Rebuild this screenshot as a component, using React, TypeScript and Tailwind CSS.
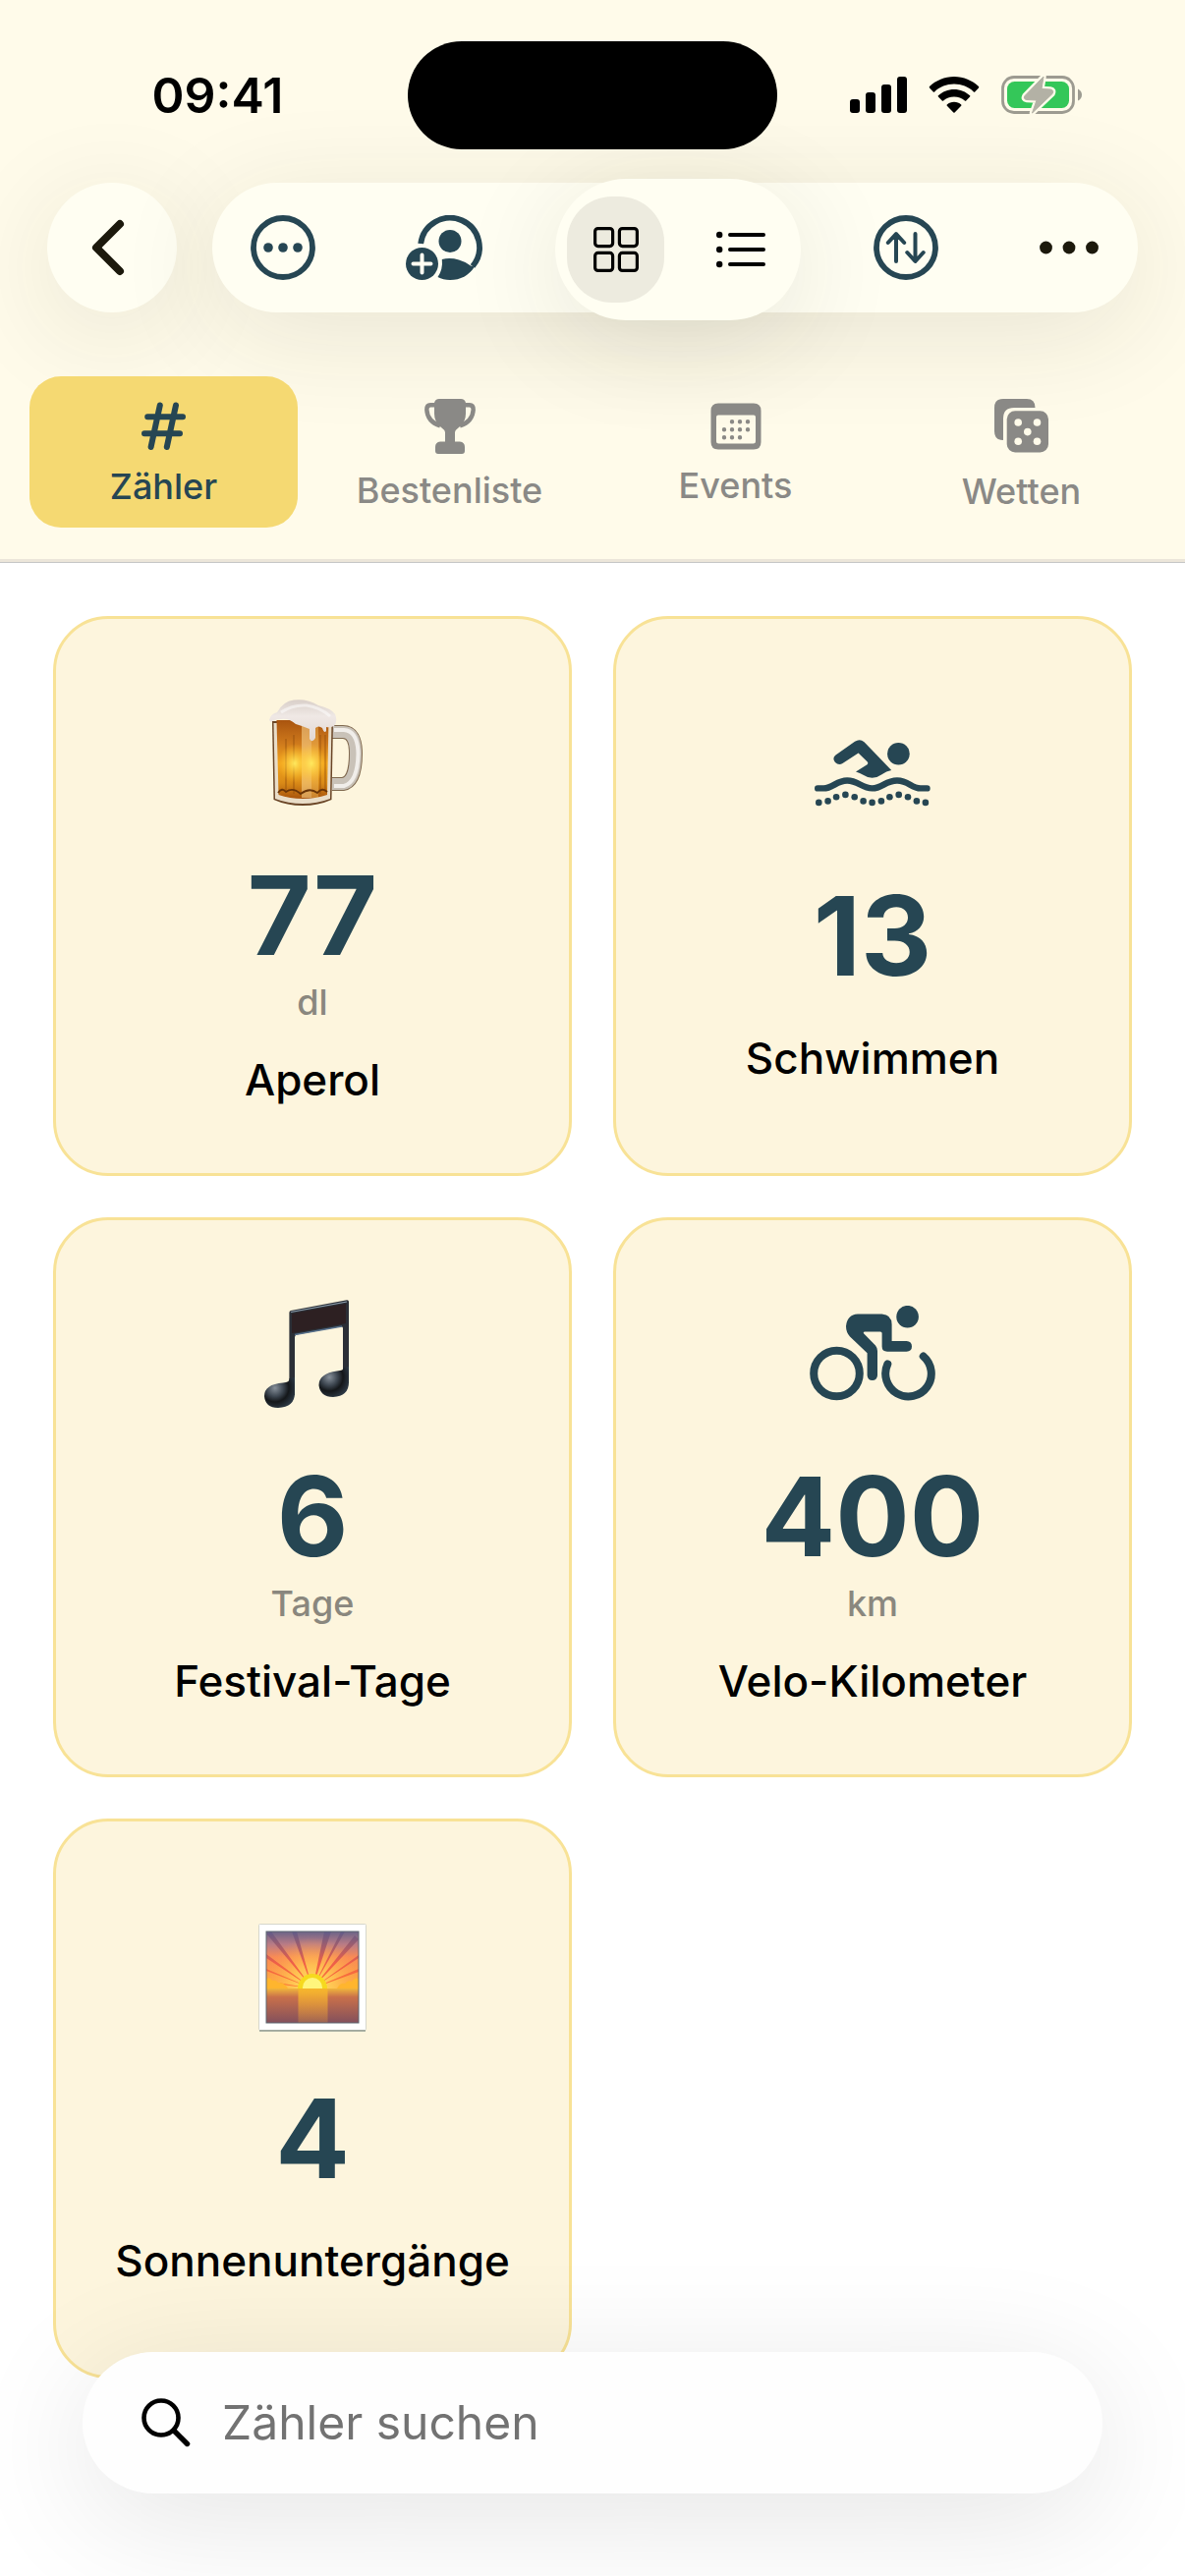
import type { ReactNode } from "react";
import clsx from "clsx";

const BAR_CLASS =
  "rounded-full bg-[#fffef2] shadow-[0_20px_110px_rgba(50,45,30,0.11)]";

/* ---------- status bar ---------- */

function SignalIcon() {
  return (
    <svg width="58" height="38" viewBox="0 0 58 38" fill="#000" aria-hidden="true">
      <rect x="0" y="23" width="10" height="14" rx="3" />
      <rect x="16" y="16" width="10" height="21" rx="3" />
      <rect x="32" y="8" width="10" height="29" rx="3" />
      <rect x="48" y="0" width="10" height="37" rx="3" />
    </svg>
  );
}

function WifiIcon() {
  return (
    <svg width="52" height="38" viewBox="0 0 52 38" fill="#000" aria-hidden="true">
      <path d="M26 0C35.700 0 44.500 3.800 51 10.100Q51.600 10.700 51 11.400L47.200 15.400Q46.600 16 45.900 15.400C40.700 10.500 33.700 7.600 26 7.600S11.300 10.500 6.100 15.400Q5.400 16 4.800 15.400L1 11.400Q.4 10.700 1 10.100C7.500 3.800 16.300 0 26 0Z" />
      <path d="M26 13C32.200 13 37.900 15.400 42.100 19.300Q42.700 19.900 42.100 20.500L38.200 24.500Q37.600 25.100 36.900 24.500C34 21.900 30.200 20.400 26 20.400S18 21.900 15.100 24.500Q14.400 25.100 13.800 24.500L9.900 20.500Q9.300 19.900 9.900 19.300C14.100 15.400 19.800 13 26 13Z" />
      <path d="M26 25.800C28.800 25.800 31.300 26.800 33.200 28.500Q33.800 29.100 33.200 29.700L26.600 36.500Q26 37.100 25.400 36.500L18.800 29.700Q18.200 29.100 18.800 28.500C20.700 26.800 23.200 25.800 26 25.800Z" />
    </svg>
  );
}

function BatteryIcon() {
  const bolt =
    "M43 1L24 20.500Q22 24 26 24.500L36 25L31.500 38L52 18.500Q54 14.500 50 14L41 13.500Z";
  return (
    <svg width="82" height="42" viewBox="0 -1 82 42" aria-hidden="true">
      <rect x="1.500" y="1.500" width="72" height="36" rx="11.500" fill="none" stroke="#9d9b91" strokeWidth="2.800" />
      <rect x="6" y="6" width="63" height="27" rx="7.500" fill="#34c759" />
      <path d="M78 13.500Q82 15.500 82 19.500T78 25.500Z" fill="#9d9b91" />
      <path d={bolt} fill="#fffbea" stroke="#fffbea" strokeWidth="5.500" strokeLinejoin="round" />
      <path d={bolt} fill="#b3b1a5" stroke="#b3b1a5" strokeWidth="1" strokeLinejoin="round" />
    </svg>
  );
}

function StatusBar() {
  return (
    <div className="grid h-[110px] grid-cols-[1fr_376px_1fr] items-center">
      <time className="pl-7 text-center text-[50px] font-semibold leading-none text-black">
        09:41
      </time>
      <div className="h-full rounded-full bg-black" />
      <div className="flex items-center justify-center gap-[22px] pr-8">
        <SignalIcon />
        <WifiIcon />
        <BatteryIcon />
      </div>
    </div>
  );
}

/* ---------- toolbar ---------- */

function ChevronIcon() {
  return (
    <svg width="44" height="60" viewBox="0 0 44 60" fill="none" stroke="#1c190c" strokeWidth="8" strokeLinecap="round" strokeLinejoin="round" aria-hidden="true">
      <path d="M30 6L6 30L30 54" />
    </svg>
  );
}

function MoreCircleIcon() {
  return (
    <svg width="66" height="66" viewBox="0 0 66 66" fill="#264653" aria-hidden="true">
      <circle cx="33" cy="33" r="30" fill="none" stroke="#264653" strokeWidth="5.800" />
      <circle cx="18" cy="33" r="4.800" />
      <circle cx="33" cy="33" r="4.800" />
      <circle cx="48" cy="33" r="4.800" />
    </svg>
  );
}

function AddPersonIcon() {
  return (
    <svg width="84" height="66" viewBox="0 0 84 66" fill="#264653" aria-hidden="true">
      <path d="M15.200 29A30 30 0 1 1 68 52" fill="none" stroke="#264653" strokeWidth="5.800" />
      <circle cx="45" cy="26.500" r="11.500" />
      <path d="M36.800 45Q45 43 54 45.500Q61 47.500 66 51.500L70 52.500Q61 66 45 66Q38 66 32.500 63Q38 55 36.800 45Z" />
      <circle cx="16.500" cy="49.500" r="16.500" />
      <path d="M16.500 40.500V58.500M7.500 49.500H25.500" stroke="#fffef2" strokeWidth="4" strokeLinecap="round" />
    </svg>
  );
}

function GridIcon() {
  return (
    <svg width="46" height="46" viewBox="0 0 46 46" fill="none" stroke="#000" strokeWidth="3.200" aria-hidden="true">
      <rect x="1.600" y="1.600" width="18" height="18" rx="3" />
      <rect x="26.400" y="1.600" width="18" height="18" rx="3" />
      <rect x="1.600" y="26.400" width="18" height="18" rx="3" />
      <rect x="26.400" y="26.400" width="18" height="18" rx="3" />
    </svg>
  );
}

function ListIcon() {
  return (
    <svg width="50" height="38" viewBox="0 0 50 38" stroke="#000" strokeWidth="4" strokeLinecap="round" aria-hidden="true">
      <path d="M14 4H48M14 19H48M14 34H48" />
      <circle cx="3.200" cy="4" r="1.200" />
      <circle cx="3.200" cy="19" r="1.200" />
      <circle cx="3.200" cy="34" r="1.200" />
    </svg>
  );
}

function SortIcon() {
  return (
    <svg width="66" height="66" viewBox="0 0 66 66" fill="none" stroke="#264653" strokeLinecap="round" strokeLinejoin="round" aria-hidden="true">
      <circle cx="33" cy="33" r="30" strokeWidth="5.800" />
      <path d="M23 47V19.500M14.800 28L23 19L31.200 28M42.500 19V46.500M34.300 38L42.500 47L50.700 38" strokeWidth="4" />
    </svg>
  );
}

function DotsIcon() {
  return (
    <svg width="60" height="14" viewBox="0 0 60 14" fill="#1c190c" aria-hidden="true">
      <circle cx="6.500" cy="7" r="6.400" />
      <circle cx="30" cy="7" r="6.400" />
      <circle cx="53.500" cy="7" r="6.400" />
    </svg>
  );
}

function ToolButton({ label, children }: { label: string; children: ReactNode }) {
  return (
    <button
      type="button"
      aria-label={label}
      className="flex size-[132px] shrink-0 items-center justify-center rounded-full"
    >
      {children}
    </button>
  );
}

function Toolbar() {
  return (
    <div className="mt-[34px] flex h-[132px] items-center gap-9 px-12">
      <div className={BAR_CLASS}>
        <ToolButton label="Zurück">
          <ChevronIcon />
        </ToolButton>
      </div>
      <div className={clsx(BAR_CLASS, "flex h-full flex-1 items-center justify-between pl-1.5 pr-1")}>
        <ToolButton label="Optionen">
          <MoreCircleIcon />
        </ToolButton>
        <ToolButton label="Person hinzufügen">
          <AddPersonIcon />
        </ToolButton>
        {/* The view switch is taller than the bar and hangs a little below it */}
        <div className={clsx(BAR_CLASS, "ml-2.5 mr-1.5 mt-1 flex h-36 w-[250px] shrink-0 items-center justify-between px-3")}>
          <button
            type="button"
            aria-label="Raster"
            aria-pressed="true"
            className="flex h-[108px] w-[99px] items-center justify-center rounded-[46px] bg-[#edebdf]"
          >
            <GridIcon />
          </button>
          <button
            type="button"
            aria-label="Liste"
            aria-pressed="false"
            className="flex h-[108px] w-[99px] items-center justify-center"
          >
            <ListIcon />
          </button>
        </div>
        <ToolButton label="Sortieren">
          <SortIcon />
        </ToolButton>
        <ToolButton label="Mehr">
          <DotsIcon />
        </ToolButton>
      </div>
    </div>
  );
}

/* ---------- tabs ---------- */

function HashIcon() {
  return (
    <svg width="45" height="50" viewBox="0 0 45 50" fill="none" stroke="#264653" strokeWidth="6" strokeLinecap="round" aria-hidden="true">
      <path d="M18.800 3.500L9.600 46M35 3.500L25.800 46M6.200 15.300H42M3 32.300H39" />
    </svg>
  );
}

function TrophyIcon() {
  return (
    <svg width="52" height="58" viewBox="0 0 52 58" fill="#8a8986" aria-hidden="true">
      <path d="M10 5Q11 1 15 1H37Q41 1 42 5V16Q42 25 35 30Q31.500 32.500 31 35V44.500H36Q41 45 41 50V54Q41 57 38 57H14Q11 57 11 54V50Q11 45 16 44.500H21V35Q20.500 32.500 17 30Q10 25 10 16Z" />
      <path d="M11 7.300H6Q2.300 7.300 2.300 12Q3 24 16 28.500M41 7.300H46Q49.700 7.300 49.700 12Q49 24 36 28.500" fill="none" stroke="#8a8986" strokeWidth="4.400" />
    </svg>
  );
}

function CalendarIcon() {
  return (
    <svg width="52" height="48" viewBox="0 0 52 48" fill="#8a8986" aria-hidden="true">
      <path fillRule="evenodd" d="M8 .5H44Q51.500 .5 51.500 8V40Q51.500 47.500 44 47.500H8Q.5 47.500 .5 40V8Q.5 .5 8 .5ZM8 12.500Q6 12.500 6 14.500V39Q6 41.500 8.500 41.500H43.500Q46 41.500 46 39V14.500Q46 12.500 44 12.500Z" />
      <path d="M22 19.300h.01M30 19.300h.01M38 19.300h.01M14 27.300h.01M22 27.300h.01M30 27.300h.01M38 27.300h.01M14 35.300h.01M22 35.300h.01M30 35.300h.01" stroke="#8a8986" strokeWidth="4.400" strokeLinecap="round" />
    </svg>
  );
}

function DiceIcon() {
  return (
    <svg width="56" height="60" viewBox="0 -2 56 60" fill="#8a8986" aria-hidden="true">
      <path d="M9 0H33Q41.500 0 41.500 9H20Q9 9 9 20V42Q0 42 0 33V9Q0 0 9 0Z" />
      <rect x="12.700" y="12.300" width="42.300" height="42.300" rx="8.500" />
      <g fill="#fffbea">
        <circle cx="24.200" cy="24" r="3.800" />
        <circle cx="43.500" cy="24" r="3.800" />
        <circle cx="33.800" cy="33.600" r="3.800" />
        <circle cx="24.200" cy="43.300" r="3.800" />
        <circle cx="43.500" cy="43.300" r="3.800" />
      </g>
    </svg>
  );
}

const TABS = [
  { label: "Zähler", icon: <HashIcon />, active: true },
  { label: "Bestenliste", icon: <TrophyIcon />, active: false },
  { label: "Events", icon: <CalendarIcon />, active: false },
  { label: "Wetten", icon: <DiceIcon />, active: false },
];

function Tabs() {
  return (
    <nav className="mt-[65px] grid grid-cols-4 gap-[18px] px-[30px] pb-8">
      {TABS.map((tab) => (
        <button
          key={tab.label}
          type="button"
          aria-current={tab.active ? "page" : undefined}
          className={clsx(
            "flex h-[154px] flex-col items-center justify-center gap-4 rounded-[32px] pt-1 text-[36px] font-medium leading-10",
            tab.active ? "bg-[#f5d972] text-[#264653]" : "text-[#8a8986]",
          )}
        >
          {tab.icon}
          {tab.label}
        </button>
      ))}
    </nav>
  );
}

/* ---------- counter icons ---------- */

function BeerIcon() {
  return (
    <svg width="104" height="108" viewBox="-8 0 104 108" aria-hidden="true">
      <defs>
        <linearGradient id="beer" x1="0" y1="0" x2="0" y2="1">
          <stop offset="0" stopColor="#a9540f" />
          <stop offset="0.300" stopColor="#cf7a1c" />
          <stop offset="0.550" stopColor="#f3a51c" />
          <stop offset="0.800" stopColor="#d98a17" />
          <stop offset="1" stopColor="#a9540c" />
        </linearGradient>
        <radialGradient id="beerGlow">
          <stop offset="0" stopColor="#ffe95e" />
          <stop offset="1" stopColor="#ffc02c" stopOpacity="0" />
        </radialGradient>
        <linearGradient id="foam" x1="0" y1="0" x2="0" y2="1">
          <stop offset="0" stopColor="#d9cfc9" />
          <stop offset="0.400" stopColor="#efe8e5" />
          <stop offset="1" stopColor="#e2d8d3" />
        </linearGradient>
      </defs>
      <path d="M64 33H75Q88 33 88 55Q88 84 75 86H64" fill="none" stroke="#80694f" strokeWidth="14" />
      <path d="M64 33H75Q88 33 88 55Q88 84 75 86H64" fill="none" stroke="#c9c2b8" strokeWidth="12" />
      <path d="M66 31H76Q90 32 90.500 55Q90 84 76 88H66" fill="none" stroke="#f1eeea" strokeWidth="4" />
      <path d="M3 22H65L63.500 102Q50 108 34 108T4.500 102Z" fill="#6a4526" />
      <path d="M4.500 24H63.500L62 101Q49 106 34 106T6 101Z" fill="#e9ddc8" />
      <path d="M7.500 21H60.500L59 97Q47 101 34 101T9.500 97Z" fill="url(#beer)" />
      <path d="M33 24H43V100H33Z" fill="#ffdf9c" opacity="0.500" />
      <path d="M43 24H50V100H43Z" fill="#ffd070" opacity="0.350" />
      <path d="M17 40V94M25 36V96M52 36V96M57 36V94" stroke="#8e4a0c" strokeWidth="1.400" opacity="0.500" />
      <ellipse cx="26" cy="65" rx="17" ry="20" fill="url(#beerGlow)" />
      <ellipse cx="43" cy="65" rx="15" ry="20" fill="url(#beerGlow)" />
      <path d="M9 95Q13 89 17 94Q24 89 32 96Q41 89 49 95Q54 89 59 94" fill="none" stroke="#6a3507" strokeWidth="1.800" />
      <path d="M0 21Q1 15 8 13Q14 2 25 .5Q39 -1 50 6Q63 9 67 15Q70 22 66 27Q61 29 58 28V32Q56 35 54 29Q50 26 47 29V39Q44 45 41 40V30Q34 27 27 25Q20 19 12 20Q5 20 2 23Z" fill="url(#foam)" />
      <path d="M12 13Q24 5 38 6Q52 8 62 17" fill="none" stroke="#fff" strokeWidth="3" opacity="0.500" />
    </svg>
  );
}

function NoteIcon() {
  return (
    <svg width="98" height="110" viewBox="0 0 98 110" aria-hidden="true">
      <defs>
        <radialGradient id="noteHead" cx="0.350" cy="0.350" r="0.700">
          <stop offset="0" stopColor="#87909a" />
          <stop offset="0.400" stopColor="#3c454f" />
          <stop offset="0.650" stopColor="#14171a" />
          <stop offset="1" stopColor="#2c3844" />
        </radialGradient>
      </defs>
      <path d="M25.400 13Q25.400 11.300 27 11L84 .2Q86 0 86 2V85H80V29Q80 27 78 27.300L33 35.500Q31 36 31 38V97H25.400Z" fill="#2b2f36" />
      <path d="M28 14L83 4V24L28 34Z" fill="#2d2022" />
      <path d="M27 12.500L84 2" stroke="#8fa0af" strokeWidth="1.200" />
      <path d="M31 35.500L79 27" stroke="#56708c" strokeWidth="1.600" />
      <path d="M25.500 80Q26 84 19 84.500Q0 86 0 98Q1 110 14 110Q31 109 31 95V79Z" fill="url(#noteHead)" />
      <path d="M80.500 69Q81 72 74 72.500Q55.500 75 55.500 87Q57 99 70 99Q86 98 86 84V68Z" fill="url(#noteHead)" />
    </svg>
  );
}

function SunsetIcon() {
  return (
    <svg width="110" height="114" viewBox="0 -4 110 114" aria-hidden="true">
      <defs>
        <linearGradient id="sky" x1="0" y1="0" x2="0" y2="1">
          <stop offset="0" stopColor="#6b6488" />
          <stop offset="0.220" stopColor="#b87b86" />
          <stop offset="0.450" stopColor="#f98a55" />
          <stop offset="1" stopColor="#ffae3a" />
        </linearGradient>
        <radialGradient id="skyGlow">
          <stop offset="0" stopColor="#ffe56b" />
          <stop offset="0.450" stopColor="#ffc653" stopOpacity="0.850" />
          <stop offset="1" stopColor="#ff9e4d" stopOpacity="0" />
        </radialGradient>
        <linearGradient id="sea" x1="0" y1="0" x2="0" y2="1">
          <stop offset="0" stopColor="#f0b53c" />
          <stop offset="0.250" stopColor="#c9704a" />
          <stop offset="1" stopColor="#83505c" />
        </linearGradient>
        <linearGradient id="glare" x1="0" y1="0" x2="0" y2="1">
          <stop offset="0" stopColor="#f6b52c" />
          <stop offset="1" stopColor="#e79a3a" stopOpacity="0.250" />
        </linearGradient>
        <linearGradient id="ray" x1="0" y1="8" x2="0" y2="66" gradientUnits="userSpaceOnUse">
          <stop offset="0" stopColor="#5f5b8a" />
          <stop offset="0.550" stopColor="#ef5f48" />
          <stop offset="1" stopColor="#ff7a32" />
        </linearGradient>
        <clipPath id="skyClip">
          <rect x="8" y="8" width="94" height="58" />
        </clipPath>
      </defs>
      <rect x="0.500" y="0.500" width="109" height="108" rx="1" fill="#fff" stroke="#d6d7cc" />
      <path d="M1 109H109" stroke="#8f9a90" strokeWidth="1.500" />
      <rect x="8" y="8" width="94" height="58" fill="url(#sky)" />
      <g clipPath="url(#skyClip)">
        <circle cx="55" cy="66" r="52" fill="url(#skyGlow)" />
        <path d="M55 66L34 8H39ZM55 66L67 8H74ZM55 66L84 8H88ZM55 66L98 12L102 16ZM55 66L102 32V35ZM55 66L102 46V49ZM55 66L8 10L13 8ZM55 66L8 31V35ZM55 66L8 46V48ZM55 66L8 58V60Z" fill="url(#ray)" />
        <path d="M8 56Q12 54 14 58Q18 57 20 60Q26 59 30 66H8ZM102 56Q98 54 95 59Q91 57 88 61Q83 60 80 66H102Z" fill="#ffb52e" />
        <circle cx="55" cy="66" r="15" fill="#f6d91e" />
        <circle cx="55" cy="65" r="10" fill="#fff57c" />
      </g>
      <rect x="8" y="66" width="94" height="35" fill="url(#sea)" />
      <rect x="40.500" y="66" width="30" height="35" fill="url(#glare)" />
      <rect x="8" y="8" width="94" height="93" fill="none" stroke="#5c6770" strokeWidth="1" />
    </svg>
  );
}

function SwimIcon() {
  const dots = [
    [4.3, 63.9], [13.6, 62.4], [22.1, 58.2], [31.4, 55.9], [40.7, 58.2], [49.6, 62.4], [58.6, 63.9],
    [67.9, 62.4], [76.4, 58.2], [85.7, 55.9], [95, 58.2], [103.9, 62.4], [112.9, 63.9],
  ];
  return (
    <svg width="118" height="68" viewBox="0 0 118 68" fill="#264653" aria-hidden="true">
      <circle cx="85.400" cy="14.200" r="11.300" />
      <path d="M21.500 15.500L41 1.800Q46 -1.500 50.500 2.200L78.200 31Q73 32 68.500 35.200Q59 42 50 36Q46 33.500 42 32.500L53.500 25.200Q55 23.700 53.600 22.200L44.600 13.400L28.500 24Q24.500 26.300 21 23Q17.500 18.500 21.500 15.500Z" />
      <path d="M3.200 49.400H9C19 49.400 22 41.500 33.200 41.500S48 49.400 58.600 49.400S72 41.500 84 41.500S98 49.400 108 49.400H114.500" fill="none" stroke="#264653" strokeWidth="6.400" strokeLinecap="round" />
      {dots.map(([x, y]) => (
        <circle key={x} cx={x} cy={y} r="3.300" />
      ))}
    </svg>
  );
}

function BikeIcon() {
  return (
    <svg width="128" height="98" viewBox="0 0 128 98" fill="#264653" aria-hidden="true">
      <circle cx="99.600" cy="11.200" r="11.300" />
      <path d="M49 8.400H73.500Q83.600 9 83.600 19V36H98.600Q104 36.500 104 41.400T98.600 46.700H79Q73.600 46.700 73.600 41.500V28Q73.600 26.400 72 26.400H56Q54 26.600 55 28.200L67 40.500Q69 43 69 46V71Q68.500 76 63.800 76T58.600 71V48.200L41 31.500Q37 27 37 21Q38 9 49 8.400Z" />
      <g fill="none" stroke="#264653" strokeWidth="8" strokeLinecap="round">
        <circle cx="27.500" cy="69" r="23.300" />
        <path d="M79.300 59.500A23.300 23.300 0 1 0 115.700 51.500" />
      </g>
    </svg>
  );
}

/* ---------- counters ---------- */

type Counter = {
  name: string;
  value: number;
  unit?: string;
  icon: ReactNode;
};

const COUNTERS: Counter[] = [
  { name: "Aperol", value: 77, unit: "dl", icon: <BeerIcon /> },
  { name: "Schwimmen", value: 13, icon: <SwimIcon /> },
  { name: "Festival-Tage", value: 6, unit: "Tage", icon: <NoteIcon /> },
  { name: "Velo-Kilometer", value: 400, unit: "km", icon: <BikeIcon /> },
  { name: "Sonnenuntergänge", value: 4, icon: <SunsetIcon /> },
];

function CounterCard({ name, value, unit, icon }: Counter) {
  return (
    <article className="flex h-[570px] flex-col items-center justify-center rounded-[56px] border-[3px] border-[#f8e296] bg-[#fdf5dd]">
      <div className="flex h-[130px] items-center">{icon}</div>
      <p className="mt-8 text-[112px] font-bold leading-[136px] text-[#264653]">{value}</p>
      {unit && <p className="text-[36px] font-medium leading-[43px] text-[#8a877e]">{unit}</p>}
      <h2 className="mt-8 text-[44px] font-medium leading-[50px] text-black">{name}</h2>
    </article>
  );
}

function SearchBar() {
  return (
    <div className="fixed inset-x-0 bottom-[84px] px-[84px]">
      <label className="flex h-36 items-center gap-8 rounded-full bg-[#fefefe] px-[60px] shadow-[0_24px_130px_rgba(0,0,0,0.11)]">
        <svg width="50" height="50" viewBox="0 0 50 50" fill="none" stroke="#000" strokeWidth="4.600" strokeLinecap="round" aria-hidden="true">
          <circle cx="20" cy="20" r="17.500" />
          <path d="M33 33L46.500 46.500" strokeWidth="5.400" />
        </svg>
        <input
          type="search"
          aria-label="Zähler suchen"
          placeholder="Zähler suchen"
          className="min-w-0 flex-1 bg-transparent text-[48px] text-black outline-none placeholder:text-[#727272]"
        />
      </label>
    </div>
  );
}

export default function App() {
  return (
    <div className="min-h-screen overflow-hidden bg-white font-['Inter','Liberation_Sans',sans-serif]">
      <header className="overflow-hidden border-b border-[#c6c6c6] bg-[#fffbea] pt-[42px]">
        <StatusBar />
        <Toolbar />
        <Tabs />
        <div className="h-[3px] bg-[#ece6da]" />
      </header>
      <main className="grid grid-cols-2 gap-[42px] px-[54px] pb-[200px] pt-[54px]">
        {COUNTERS.map((counter) => (
          <CounterCard key={counter.name} {...counter} />
        ))}
      </main>
      <SearchBar />
    </div>
  );
}
